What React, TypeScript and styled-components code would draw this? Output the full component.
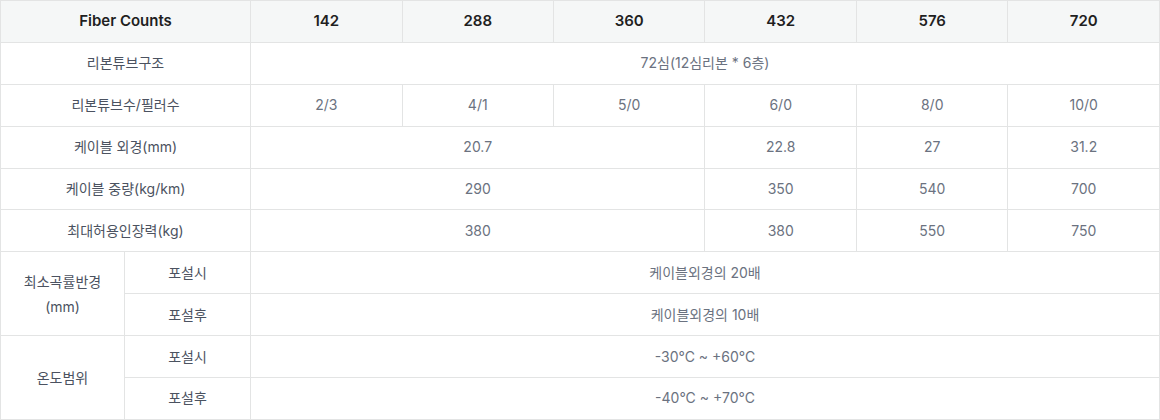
import styled, {createGlobalStyle} from "styled-components";

const GlobalStyle = createGlobalStyle`
  body {
    margin: 0;
    background: #fff;
    font-family: Inter, "Noto Sans CJK KR", sans-serif;
  }
`

const counts = ["142", "288", "360", "432", "576", "720"]

type Cell = { text: string, span?: number }

const rows: { label: string, cells: Cell[] }[] = [
  {label: "리본튜브구조", cells: [{text: "72심(12심리본 * 6층)", span: 6}]},
  {label: "리본튜브수/필러수", cells: ["2/3", "4/1", "5/0", "6/0", "8/0", "10/0"].map((text) => ({text}))},
  {label: "케이블 외경(mm)", cells: [{text: "20.7", span: 3}, {text: "22.8"}, {text: "27"}, {text: "31.2"}]},
  {label: "케이블 중량(kg/km)", cells: [{text: "290", span: 3}, {text: "350"}, {text: "540"}, {text: "700"}]},
  {label: "최대허용인장력(kg)", cells: [{text: "380", span: 3}, {text: "380"}, {text: "550"}, {text: "750"}]},
]

const groups = [
  {label: ["최소곡률반경", "(mm)"], sub: [["포설시", "케이블외경의 20배"], ["포설후", "케이블외경의 10배"]]},
  {label: ["온도범위"], sub: [["포설시", "-30°C ~ +60°C"], ["포설후", "-40°C ~ +70°C"]]},
]

export default function App() {
  return (
    <>
      <GlobalStyle/>
      <Table>
        <colgroup>
          <col style={{width: 124}}/>
          <col style={{width: 126}}/>
          {counts.map((c) => <col key={c}/>)}
        </colgroup>
        <thead>
          <tr>
            <Head colSpan={2}>Fiber Counts</Head>
            {counts.map((c) => <Head key={c}>{c}</Head>)}
          </tr>
        </thead>
        <tbody>
          {rows.map((row) => (
            <tr key={row.label}>
              <Label colSpan={2}>{row.label}</Label>
              {row.cells.map((cell, i) => (
                <Value key={i} colSpan={cell.span}>{cell.text}</Value>
              ))}
            </tr>
          ))}
          {groups.map((g) =>
            g.sub.map(([name, value], i) => (
              <tr key={g.label[0] + name}>
                {i === 0 && (
                  <Label rowSpan={2}>
                    {g.label.map((l) => <Line key={l}>{l}</Line>)}
                  </Label>
                )}
                <Label>{name}</Label>
                <Value colSpan={6}>{value}</Value>
              </tr>
            ))
          )}
        </tbody>
      </Table>
    </>
  );
}

const Table = styled.table`
  width: 1160px;
  border-collapse: collapse;
  table-layout: fixed;
`

const CellBase = styled.td`
  height: 40.9px;
  padding: 0;
  border: 1px solid #e3e4e4;
  text-align: center;
  vertical-align: middle;
  font-size: 14px;
  line-height: 20px;
`

const Head = styled(CellBase).attrs({as: "th"})`
  background-color: #f5f7f7;
  color: #1f1f1f;
  font-size: 15px;
  font-weight: 600;
`

const Label = styled(CellBase)`
  color: #4b5260;
`

const Value = styled(CellBase)`
  color: #6b7280;
`

const Line = styled.div`
  line-height: 25px;
`
